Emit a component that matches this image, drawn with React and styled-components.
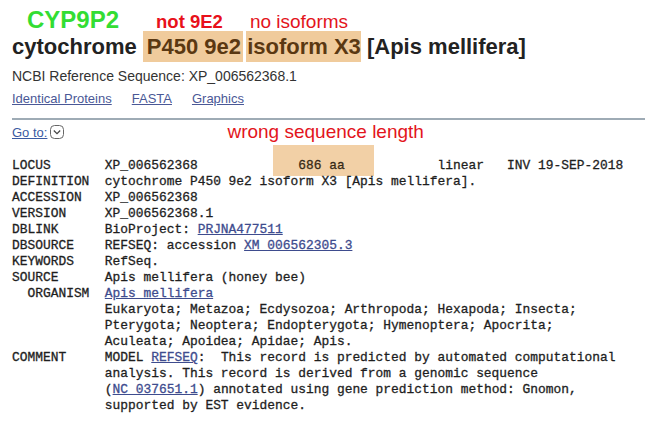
import React from "react";
import styled, { createGlobalStyle } from "styled-components";

const GlobalStyle = createGlobalStyle`
  body {
    margin: 0;
    background: #ffffff;
    font-family: "Liberation Sans", Arial, sans-serif;
    color: #222;
  }
`;

const Page = styled.div`
  padding: 0 15px 0 12px;
`;

const Notes = styled.div`
  display: flex;
  align-items: baseline;
  height: 31px;
  padding-top: 8px;
  box-sizing: border-box;
`;

const Note = styled.span`
  margin-left: ${(p) => p.$left}px;
  font-size: ${(p) => p.$size}px;
  line-height: 24px;
  font-weight: ${(p) => (p.$bold ? 700 : 400)};
  color: ${(p) => p.$color};
  white-space: nowrap;
`;

const Title = styled.h1`
  margin: 0;
  font-size: 22px;
  line-height: 30px;
  font-weight: 700;
  color: #222;
  white-space: nowrap;
`;

// highlight boxes were drawn by hand, so they sit a bit loose around the words
const Mark = styled.span`
  display: inline-block;
  line-height: 26px;
  padding: 3px ${(p) => p.$right}px 2px ${(p) => p.$left}px;
  margin-left: ${(p) => p.$shift || 0}px;
  background: #f0cb9c;
  color: #5a3812;
`;

const RefSeq = styled.p`
  margin: 6px 0 0;
  font-size: 14px;
  line-height: 16px;
  color: #333;
`;

const Links = styled.div`
  display: flex;
  gap: 20px;
  margin-top: 7px;
  font-size: 13px;
  line-height: 16px;
`;

const Link = styled.a`
  color: #4a5896;
  text-decoration: underline;
`;

const Rule = styled.hr`
  margin: 11px 0 0;
  border: none;
  height: 2px;
  background: #9eabb5;
`;

const GoRow = styled.div`
  display: flex;
  align-items: center;
  height: 22px;
  margin-top: 1px;
`;

const GoLink = styled.a`
  color: #3a5aa2;
  font-size: 13px;
  text-decoration: underline;
`;

const GoIcon = styled.svg`
  margin-left: 3px;
  width: 14px;
  height: 14px;
`;

const Wrong = styled.span`
  margin-left: 163px;
  font-size: 19px;
  color: #e3141c;
`;

const Record = styled.div`
  margin-top: 15px;
  font-family: "Liberation Mono", "Courier New", monospace;
  font-size: 12.9px;
  line-height: 16px;
  color: #1e1e1e;
  -webkit-text-stroke: 0.3px #1e1e1e;
  white-space: pre;
`;

const Line = styled.div`
  height: 16px;
`;

const MonoLink = styled.a`
  color: #3e4c8e;
  -webkit-text-stroke: 0.3px #3e4c8e;
  text-decoration: underline;
`;

const Length = styled.span`
  position: relative;
  color: #4a3010;

  &::before {
    content: "";
    position: absolute;
    top: -13px;
    bottom: -3px;
    left: -25px;
    right: -29px;
    background: #f2d0a6;
    z-index: -1;
  }
`;

const pad = "            ";

export default function App() {
  return (
    <>
      <GlobalStyle />
      <Page>
        <Notes>
          <Note $left={15} $size={24} $bold $color="#33dd33">CYP9P2</Note>
          <Note $left={37} $size={18.5} $bold $color="#e8101a">not 9E2</Note>
          <Note $left={27} $size={19} $color="#e3141c">no isoforms</Note>
        </Notes>
        <Title>
          cytochrome <Mark $left={4} $right={2}>P450 9e2</Mark>
          {" "}
          <Mark $left={1} $right={0} $shift={-3}>isoform X3</Mark> [Apis mellifera]
        </Title>
        <RefSeq>NCBI Reference Sequence: XP_006562368.1</RefSeq>
        <Links>
          <Link>Identical Proteins</Link>
          <Link>FASTA</Link>
          <Link>Graphics</Link>
        </Links>
        <Rule />
        <GoRow>
          <GoLink>Go to:</GoLink>
          <GoIcon viewBox="0 0 14 14">
            <rect x="0.5" y="0.5" width="13" height="13" rx="4" fill="none" stroke="#666" />
            <path d="M3.8 5.5 L7 8.7 L10.2 5.5" fill="none" stroke="#444" strokeWidth="1.2" />
          </GoIcon>
          <Wrong>wrong sequence length</Wrong>
        </GoRow>
        <Record>
          <Line>
            {"LOCUS       XP_006562368             "}
            <Length>686 aa</Length>
            {"            linear   INV 19-SEP-2018"}
          </Line>
          <Line>{"DEFINITION  cytochrome P450 9e2 isoform X3 [Apis mellifera]."}</Line>
          <Line>{"ACCESSION   XP_006562368"}</Line>
          <Line>{"VERSION     XP_006562368.1"}</Line>
          <Line>
            {"DBLINK      BioProject: "}
            <MonoLink>PRJNA477511</MonoLink>
          </Line>
          <Line>
            {"DBSOURCE    REFSEQ: accession "}
            <MonoLink>XM_006562305.3</MonoLink>
          </Line>
          <Line>{"KEYWORDS    RefSeq."}</Line>
          <Line>{"SOURCE      Apis mellifera (honey bee)"}</Line>
          <Line>
            {"  ORGANISM  "}
            <MonoLink>Apis mellifera</MonoLink>
          </Line>
          <Line>{pad + "Eukaryota; Metazoa; Ecdysozoa; Arthropoda; Hexapoda; Insecta;"}</Line>
          <Line>{pad + "Pterygota; Neoptera; Endopterygota; Hymenoptera; Apocrita;"}</Line>
          <Line>{pad + "Aculeata; Apoidea; Apidae; Apis."}</Line>
          <Line>
            {"COMMENT     MODEL "}
            <MonoLink>REFSEQ</MonoLink>
            {":  This record is predicted by automated computational"}
          </Line>
          <Line>{pad + "analysis. This record is derived from a genomic sequence"}</Line>
          <Line>
            {pad + "("}
            <MonoLink>NC_037651.1</MonoLink>
            {") annotated using gene prediction method: Gnomon,"}
          </Line>
          <Line>{pad + "supported by EST evidence."}</Line>
        </Record>
      </Page>
    </>
  );
}
